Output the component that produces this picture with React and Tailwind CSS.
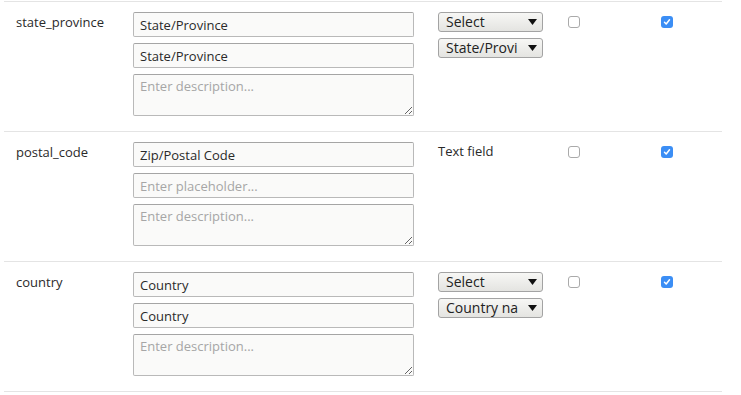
import React from "react";

const rows = [
  {
    name: "state_province",
    label: "State/Province",
    placeholder: "State/Province",
    kind: "select",
    second: "State/Provi",
  },
  {
    name: "postal_code",
    label: "Zip/Postal Code",
    placeholder: "",
    kind: "text",
  },
  {
    name: "country",
    label: "Country",
    placeholder: "Country",
    kind: "select",
    second: "Country na",
  },
];

function FakeSelect({ text }) {
  return (
    <div className="flex h-[20px] w-[105px] items-center rounded-[3px] border border-[#a3a3a3] bg-gradient-to-b from-[#f7f7f5] to-[#e4e4e1] pl-[7px] pr-[5px] text-[14px] leading-[18px] text-[#222]">
      <span className="w-[78px] overflow-hidden whitespace-nowrap">{text}</span>
      <svg width="9" height="6" viewBox="0 0 9 6" className="ml-auto shrink-0">
        <path d="M0 0 L9 0 L4.5 6 Z" fill="#111" />
      </svg>
    </div>
  );
}

function Check({ checked }) {
  if (checked) {
    return (
      <div className="flex h-[12px] w-[12px] items-center justify-center rounded-[3px] bg-[#3b8ef5]">
        <svg width="8" height="8" viewBox="0 0 8 8">
          <path d="M1.5 4.3 L3.2 6 L6.5 1.8" stroke="#fff" strokeWidth="1.5" fill="none" strokeLinecap="round" strokeLinejoin="round" />
        </svg>
      </div>
    );
  }
  return <div className="h-[12px] w-[12px] rounded-[3px] border border-[#aaaaaa] bg-white" />;
}

const inputCls =
  "block h-[25px] w-[281px] rounded-[2px] border border-[#b9b9b9] border-t-[#a5a5a5] bg-[#fafaf9] px-[6px] text-[13px] text-[#2a2a2a] placeholder:text-[#a6a6a6] outline-none";

export default function App() {
  return (
    <div
      className="min-h-[395px] bg-white pt-[1px]"
      style={{ fontFamily: '"Open Sans", "DejaVu Sans", sans-serif' }}
    >
      {rows.map((r) => (
        <div
          key={r.name}
          className="ml-[4px] flex h-[130px] w-[718px] border-t border-[#e4e4e4] pt-[10px]"
        >
          <div className="w-[129px] pl-[12px] pt-[2px] text-[13px] leading-[16px] text-[#2a2a2a]">
            {r.name}
          </div>
          <div className="flex w-[281px] flex-col gap-[6px]">
            <input className={inputCls} defaultValue={r.label} readOnly />
            <input
              className={inputCls}
              defaultValue={r.placeholder}
              placeholder="Enter placeholder..."
              readOnly
            />
            <textarea
              className="block h-[42px] w-[281px] rounded-[2px] border border-[#b9b9b9] border-t-[#a5a5a5] bg-[#fafaf9] px-[6px] py-[3px] text-[13px] leading-[16px] text-[#2a2a2a] placeholder:text-[#a6a6a6] outline-none"
              placeholder="Enter description..."
              readOnly
            />
          </div>
          <div className="ml-[24px] w-[105px]">
            {r.kind === "select" ? (
              <div className="flex flex-col gap-[6px]">
                <FakeSelect text="Select" />
                <FakeSelect text={r.second} />
              </div>
            ) : (
              <div className="pt-[1px] text-[13px] leading-[16px] text-[#2a2a2a]">Text field</div>
            )}
          </div>
          <div className="ml-[25px] pt-[4px]">
            <Check checked={false} />
          </div>
          <div className="ml-[81px] pt-[4px]">
            <Check checked={true} />
          </div>
        </div>
      ))}
      <div className="ml-[4px] w-[718px] border-t border-[#e4e4e4]" />
    </div>
  );
}
